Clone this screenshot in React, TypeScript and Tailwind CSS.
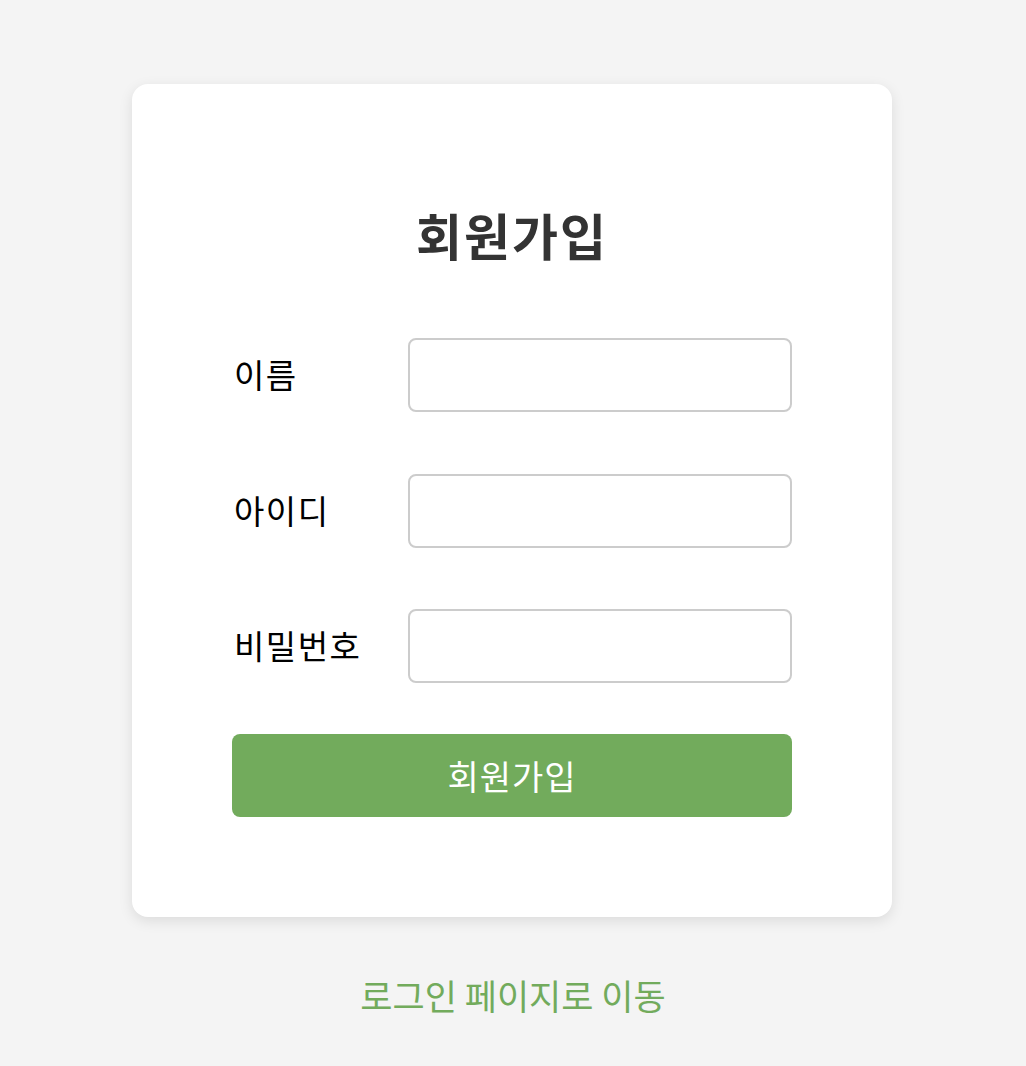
import React, { useState } from 'react';

const font = { fontFamily: '"Noto Sans CJK KR", "Noto Sans", sans-serif' };

const fields = [
  { id: 'name', label: '이름', type: 'text' },
  { id: 'userId', label: '아이디', type: 'text' },
  { id: 'password', label: '비밀번호', type: 'password' },
];

const App: React.FC = () => {
  const [values, setValues] = useState<Record<string, string>>({});

  return (
    <div className="min-h-screen bg-[#f4f4f4] pt-[84px]" style={font}>
      {/* Card */}
      <div className="ml-[132px] w-[760px] rounded-2xl bg-white p-[100px] shadow-[0_4px_14px_rgba(0,0,0,0.1)]">
        <h1 className="mb-[54px] flex h-[100px] items-center justify-center text-[50px] font-bold tracking-[2px] text-[#333]">
          회원가입
        </h1>

        <div className="flex flex-col gap-[61.5px]">
          {fields.map((f) => (
            <div key={f.id} className="flex h-[74px] items-center">
              <label htmlFor={f.id} className="w-[176px] pl-[2px] text-[33px] tracking-[1.5px] text-black">
                {f.label}
              </label>
              <input
                id={f.id}
                type={f.type}
                value={values[f.id] ?? ''}
                onChange={(e) => setValues({ ...values, [f.id]: e.target.value })}
                className="h-[74px] w-[384px] rounded-lg border-2 border-[#ccc] bg-white px-4 text-[28px] outline-none"
              />
            </div>
          ))}
        </div>

        <button className="mt-[51px] flex h-[83px] w-full items-center justify-center rounded-lg bg-[#72ab5c] text-[34px] tracking-[1px] text-white">
          회원가입
        </button>
      </div>

      <div className="mt-[52px] text-center">
        <a href="#" className="text-[35px] text-[#72ab5c]">
          로그인 페이지로 이동
        </a>
      </div>
    </div>
  );
};

export default App;
